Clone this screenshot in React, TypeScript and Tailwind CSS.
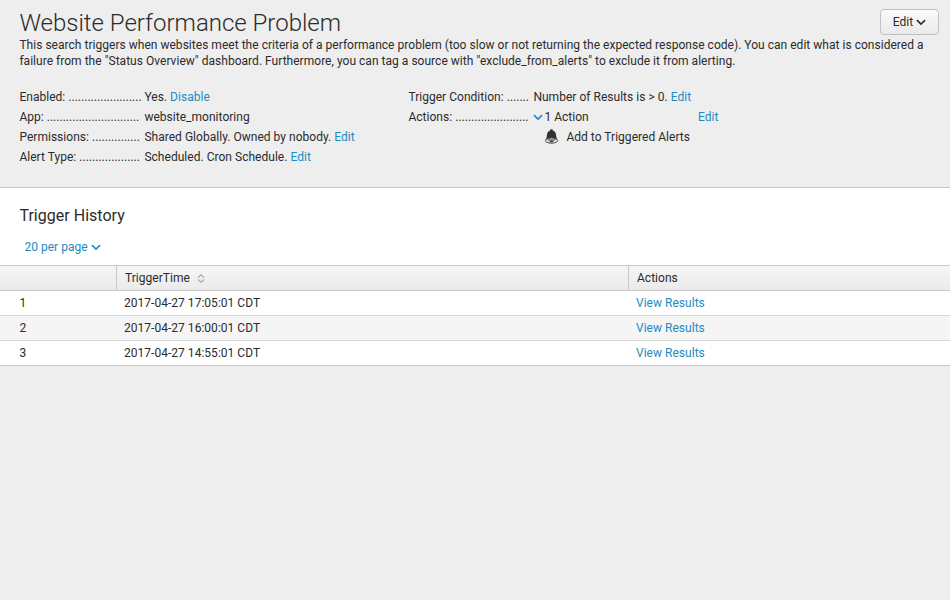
import React from 'react';

const Chevron = ({ className = '' }: { className?: string }) => (
  <svg className={className} width="10" height="7" viewBox="0 0 10 7" fill="none" stroke="currentColor" strokeWidth="1.6">
    <path d="M0.9 1.2 5 5.1 9.1 1.2" />
  </svg>
);

const Link = ({ children }: { children: React.ReactNode }) => (
  <a href="#" className="text-[#1e8bc3]">{children}</a>
);

function Field({ label, leader, children }: { label: string; leader: number; children: React.ReactNode }) {
  return (
    <div className="flex h-5 whitespace-nowrap">
      <div className="w-[125px] shrink-0">{label}: {'.'.repeat(leader)}</div>
      <div>{children}</div>
    </div>
  );
}

const rows = ['2017-04-27 17:05:01 CDT', '2017-04-27 16:00:01 CDT', '2017-04-27 14:55:01 CDT'];

export default function App() {
  return (
    <div className="h-[600px] w-[950px] overflow-hidden bg-[#eeeeee] font-['Roboto',sans-serif] text-[12px] leading-5 tracking-[0.027px] text-[#2b2b2b]">
      <header className="h-[188px] border-b border-[#c8c8c8] pl-[19.4px] pr-[11px] pt-[9px]">
        <div className="flex h-7 justify-between">
          <h1 className="whitespace-nowrap text-[24px] font-light leading-7 tracking-normal">Website Performance Problem</h1>
          <button className="flex h-[26px] w-[59px] items-center justify-center gap-[3px] rounded-[4px] border border-[#c1c1c1] bg-gradient-to-b from-[#fafafa] to-[#eaeaea]">
            Edit <Chevron />
          </button>
        </div>
        <p className="h-[50px] leading-4">
          <span className="block whitespace-nowrap">This search triggers when websites meet the criteria of a performance problem (too slow or not returning the expected response code). You can edit what is considered a</span>
          <span className="block whitespace-nowrap">failure from the "Status Overview" dashboard. Furthermore, you can tag a source with "exclude_from_alerts" to exclude it from alerting.</span>
        </p>
        <div className="flex">
          <div className="w-[389px]">
            <Field label="Enabled" leader={23}>Yes. <Link>Disable</Link></Field>
            <Field label="App" leader={29}>website_monitoring</Field>
            <Field label="Permissions" leader={15}>Shared Globally. Owned by nobody. <Link>Edit</Link></Field>
            <Field label="Alert Type" leader={19}>Scheduled. Cron Schedule. <Link>Edit</Link></Field>
          </div>
          <div>
            <Field label="Trigger Condition" leader={7}>Number of Results is &gt; 0. <Link>Edit</Link></Field>
            <Field label="Actions" leader={23}>
              <div className="flex w-[185px] items-center justify-between">
                <span className="flex items-center gap-[1px]"><Chevron className="text-[#1e8bc3]" />1 Action</span>
                <Link>Edit</Link>
              </div>
            </Field>
            <div className="flex h-5 items-center pl-[136px]">
              <svg className="mr-[7px]" width="15" height="16" viewBox="0 0 15 16">
                <path d="M7.5 0.3c.9 0 1.4.5 1.4 1.3 2 .7 3 2.4 3.2 4.6.2 2.3.6 3.8 1.7 5H1.2c1.1-1.2 1.5-2.7 1.7-5 .2-2.2 1.2-3.9 3.2-4.6 0-.8.5-1.3 1.4-1.3Z" fill="#333" />
                <ellipse cx="7.5" cy="11.6" rx="6" ry="2.6" fill="#eee" stroke="#444" />
                <path d="M3.2 10.5 11.8 10.5 11 11.5H4Z" fill="#333" />
                <ellipse cx="7.5" cy="12.4" rx="2" ry="1" fill="#444" />
              </svg>
              Add to Triggered Alerts
            </div>
          </div>
        </div>
      </header>
      <main className="bg-white">
        <div className="h-[77px] pl-[19.4px] pt-[18px]">
          <h2 className="text-[16px] leading-5">Trigger History</h2>
          <div className="flex items-center gap-[3px] pl-[5px] pt-[11px] text-[#1e8bc3]">20 per page <Chevron /></div>
        </div>
        <div className="grid h-[26px] grid-cols-[116px_512px_1fr] border-y border-[#c8c8c8] bg-gradient-to-b from-[#f5f5f5] to-[#ebebeb] leading-6">
          <div />
          <div className="flex items-center gap-[7px] border-l border-[#c8c8c8] pl-2">TriggerTime
            <svg width="8" height="9" viewBox="0 0 8 9" fill="none" stroke="#aaa" strokeWidth="1.2"><path d="M1 3.5 4 .8l3 2.7M1 5.5l3 2.7 3-2.7" /></svg>
          </div>
          <div className="border-l border-[#c8c8c8] pl-2">Actions</div>
        </div>
        {rows.map((t, i) => (
          <div key={t} className={`grid h-[25px] grid-cols-[116px_512px_1fr] border-b leading-6 ${i === 1 ? 'bg-[#f5f5f5]' : 'bg-white'} ${i === 2 ? 'border-[#c8c8c8]' : 'border-[#d8d8d8]'}`}>
            <div className="pl-[19.4px]">{i + 1}</div>
            <div className="pl-2">{t}</div>
            <div className="pl-2"><Link>View Results</Link></div>
          </div>
        ))}
      </main>
    </div>
  );
}
